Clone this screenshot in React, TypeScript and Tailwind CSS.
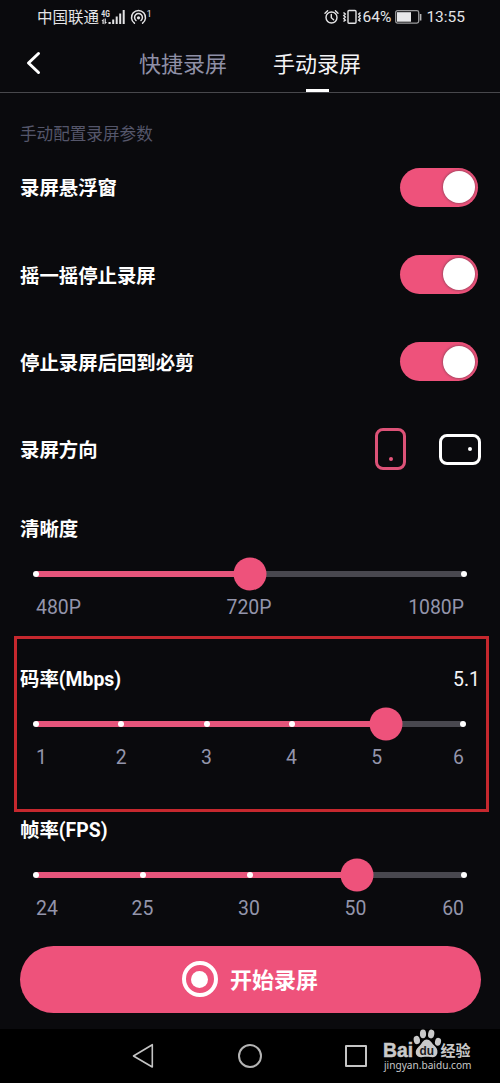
import { useState } from "react";

type SliderProps = {
  title: string;
  ticks: string[];
  percent: number;
  value?: string;
};

function SignalIcon() {
  return (
    <svg width="25" height="17" viewBox="0 0 25 17" fill="#e4e4e6" className="ml-[2px]" aria-hidden>
      <text x="0.3" y="7.500" fontSize="9.500" fontWeight="700" fontFamily="Roboto, sans-serif" textLength="8.500" lengthAdjust="spacingAndGlyphs">
        4G
      </text>
      <path d="M0.500 12 2.700 9.500V15H1.500v-3zM3.600 9.500h1.200V13H6l-2.400 2.500z" />
      <rect x="7.500" y="13" width="2.200" height="2" />
      <rect x="11.200" y="10.500" width="2" height="4.500" />
      <rect x="14.700" y="7.500" width="2" height="7.500" />
      <rect x="18.200" y="4.500" width="2" height="10.500" />
      <rect x="21.700" y="1" width="2" height="14" />
    </svg>
  );
}

function HotspotIcon() {
  return (
    <svg width="22" height="17" viewBox="0 0 22 17" fill="none" stroke="#e4e4e6" strokeWidth="1.500" strokeLinecap="round" className="ml-1" aria-hidden>
      <path d="M4.400 14.200A7 7 0 1 1 12.600 14.200" />
      <path d="M6 11.500A3.900 3.900 0 1 1 11 11.500" />
      <circle cx="8.500" cy="8.800" r="1.600" fill="#e4e4e6" stroke="none" />
      <text x="16.500" y="7.500" fill="#e4e4e6" stroke="none" fontSize="9.500" fontFamily="Roboto, sans-serif">
        1
      </text>
    </svg>
  );
}

function AlarmIcon() {
  return (
    <svg width="15" height="16" viewBox="0 0 15 16" fill="none" stroke="#e4e4e6" strokeWidth="1.400" strokeLinecap="round" aria-hidden>
      <circle cx="7.500" cy="8.500" r="5.500" />
      <path d="M7.300 5.500v3.200l2.300 2M1 4.200 3.600 1.800M14 4.200l-2.600-2.400" />
    </svg>
  );
}

function VibrateIcon() {
  return (
    <svg width="20" height="16" viewBox="0 0 20 16" fill="none" stroke="#e4e4e6" strokeWidth="1.400" aria-hidden>
      <rect x="6" y="1.500" width="8" height="12.800" rx="1" />
      <path d="m1.500 3.500 1.800 1.600-1.500 1.500 1.500 1.500-1.500 1.500 1.500 1.500-1.800 1.400M18.500 3.500l-1.800 1.600 1.500 1.500-1.500 1.500 1.500 1.500-1.500 1.500 1.800 1.400" />
    </svg>
  );
}

function BatteryIcon() {
  return (
    <svg width="27" height="14" viewBox="0 0 27 14" fill="none" aria-hidden>
      <rect x="0.700" y="0.700" width="23" height="12.400" rx="1.800" stroke="#9a9a9c" strokeWidth="1.300" />
      <rect x="2" y="2.200" width="14" height="9.500" fill="#e8e8ea" />
      <rect x="24.800" y="4" width="1.600" height="6.500" fill="#b5b5b7" />
    </svg>
  );
}

function StatusBar() {
  return (
    <div className="flex h-[34px] items-center pr-[35px] pl-[37px] text-[15.5px] text-[#e4e4e6]">
      <span className="pt-[3px]">中国联通</span>
      <SignalIcon />
      <HotspotIcon />
      <div className="ml-auto flex items-center">
        <AlarmIcon />
        <span className="ml-[3px]">
          <VibrateIcon />
        </span>
        <span className="ml-[1px] pt-[2px]">64%</span>
        <span className="ml-1">
          <BatteryIcon />
        </span>
        <span className="ml-[4px] pt-[2px]">13:55</span>
      </div>
    </div>
  );
}

function Header() {
  return (
    <header className="flex h-[59px] border-b border-[#48484c] text-[22px]">
      <button type="button" aria-label="返回" className="w-[139px] pl-[26px]">
        <svg width="16" height="24" viewBox="0 0 16 24" fill="none" stroke="#fff" strokeWidth="3" strokeLinecap="round" strokeLinejoin="round">
          <path d="M12.500 2.500 2.500 12l10 9.500" />
        </svg>
      </button>
      <button type="button" className="pt-[3px] text-[#8f90a6]">
        快捷录屏
      </button>
      <button type="button" className="ml-[46px] flex flex-col items-center justify-between text-[#f4f4f6]">
        <span className="pt-[20px]">手动录屏</span>
        <span className="h-[3px] w-[23px] bg-white" />
      </button>
    </header>
  );
}

function Toggle() {
  const [on, setOn] = useState(true);
  return (
    <button
      type="button"
      role="switch"
      aria-checked={on}
      onClick={() => setOn(!on)}
      className={`flex h-[39px] w-[78px] items-center rounded-full px-[3.5px] ${on ? "justify-end bg-[#ee527b]" : "justify-start bg-[#48474e]"}`}
    >
      <span className="size-[32px] rounded-full bg-white shadow-[0_0_2px_1px_rgba(90,60,70,0.45)]" />
    </button>
  );
}

function Row({ label, children }: { label: string; children: React.ReactNode }) {
  return (
    <div className="flex h-[87.300px] items-center justify-between text-[19.4px] font-bold">
      <span className="pt-1">{label}</span>
      {children}
    </div>
  );
}

function Slider({ title, ticks, percent, value }: SliderProps) {
  const last = ticks.length - 1;
  return (
    <div className="flex flex-col">
      <div className="flex h-[51px] items-center justify-between pt-[3px] text-[19.4px]">
        <span className="font-bold">{title}</span>
        {value ? <span className="text-[#f4f4f6]">{value}</span> : null}
      </div>
      <div className="flex h-10 items-center px-4">
        <div className="relative flex h-[6px] w-full items-center justify-between bg-[#48474e]">
          <div className="absolute inset-y-0 left-0 bg-[#e5557b]" style={{ width: `${percent}%` }} />
          {ticks.map((t, i) => (
            <span key={t} className={`relative flex justify-center ${i === last ? "w-px" : "w-0"}`}>
              <span className="size-[6px] shrink-0 rounded-full bg-white" />
            </span>
          ))}
          <div
            className="absolute top-1/2 size-[33px] -translate-x-1/2 -translate-y-1/2 rounded-full bg-[#ee527b]"
            style={{ left: `${percent}%` }}
          />
        </div>
      </div>
      <div className="flex h-[26px] items-center justify-between px-4 pt-[2px] text-[19.4px] text-[#9495ab]">
        {ticks.map((t, i) => (
          <span
            key={t}
            className={`flex ${i === 0 ? "w-0 justify-start" : i === last ? "w-[2px] justify-end" : "w-0 justify-center"}`}
          >
            {t}
          </span>
        ))}
      </div>
    </div>
  );
}

function NavBar() {
  return (
    <nav className="relative flex h-[54px] items-center justify-between bg-black pr-[133px] pl-[132px]">
      <svg width="22" height="26" viewBox="0 0 22 26" fill="none" stroke="#c4c4c4" strokeWidth="1.600" strokeLinejoin="round" aria-hidden>
        <path d="M20.300 1.700v22.300L1.500 13z" />
      </svg>
      <span className="size-[24px] rounded-full border-2 border-[#b4b4b4]" />
      <span className="size-[22px] rounded-[1px] border-2 border-[#c4c4c4]" />
      <Watermark />
    </nav>
  );
}

function Watermark() {
  return (
    <svg className="absolute top-0 left-[380px]" width="96" height="46" viewBox="0 0 96 46" fill="#c9c9c9" aria-label="Baidu 经验">
      <text x="3" y="28" fontSize="20" fontWeight="700" fontFamily="Liberation Sans, sans-serif" textLength="30" lengthAdjust="spacingAndGlyphs" stroke="#c9c9c9" strokeWidth="0.500">
        Bai
      </text>
      <ellipse cx="36.800" cy="11" rx="3.100" ry="4.200" transform="rotate(-12 36.800 11)" />
      <ellipse cx="43" cy="4.800" rx="3.100" ry="4.400" />
      <ellipse cx="51.200" cy="5" rx="3.100" ry="4.400" transform="rotate(10 51.200 5)" />
      <ellipse cx="58" cy="12.800" rx="3" ry="4" transform="rotate(14 58 12.800)" />
      <path d="M46.800 10.500c3.400 0 4.800 3.400 6.900 5.500 2.600 2.500 4.200 4.500 3.700 7.700-.6 4-3.800 4.900-6.800 4.400-2.800-.5-4.800-.5-7.600 0-3.200.4-7-.6-7.200-4.400-.2-3.400 2.200-5.200 4.500-7.700 1.900-2.100 3.100-5.500 6.500-5.500z" />
      <text x="39.500" y="26" fill="#1a1a1a" fontSize="13" fontWeight="700" fontFamily="Liberation Sans, sans-serif" textLength="14.500" lengthAdjust="spacingAndGlyphs">
        du
      </text>
      <text x="60.500" y="27" fontSize="15" fontWeight="700" fontFamily="Noto Sans CJK SC, sans-serif">
        经验
      </text>
      <text x="4" y="40" fontSize="10.500" fontFamily="Noto Sans, sans-serif" textLength="87.500" lengthAdjust="spacingAndGlyphs">
        jingyan.baidu.com
      </text>
    </svg>
  );
}

export default function App() {
  return (
    <div className="flex h-[1083px] w-[500px] flex-col overflow-hidden bg-[#0a0a0d] font-[Roboto,'Noto_Sans_CJK_SC',sans-serif] leading-none text-white">
      <StatusBar />
      <Header />
      <main className="flex grow flex-col px-5">
        <p className="h-[50.500px] pt-[34px] text-[16.6px] text-[#55566a]">手动配置录屏参数</p>
        <div className="pr-[2px]">
          <Row label="录屏悬浮窗">
            <Toggle />
          </Row>
          <Row label="摇一摇停止录屏">
            <Toggle />
          </Row>
          <Row label="停止录屏后回到必剪">
            <Toggle />
          </Row>
        </div>
        <Row label="录屏方向">
          <div className="-mr-px flex items-center gap-[33px]">
            <button type="button" aria-label="竖屏" className="flex h-[42px] w-[31px] items-end justify-center rounded-[8px] border-[3px] border-[#dc5277] pb-[6px]">
              <span className="size-[4px] rounded-full bg-[#e5557b]" />
            </button>
            <button type="button" aria-label="横屏" className="flex h-[31px] w-[42px] items-center justify-end rounded-[8px] border-[3px] border-white pr-[6px]">
              <span className="size-[4px] rounded-full bg-white" />
            </button>
          </div>
        </Row>
        <div className="mt-[10px] flex flex-col gap-[33.500px]">
          <Slider title="清晰度" ticks={["480P", "720P", "1080P"]} percent={50} />
          <div className="relative">
            <Slider title="码率(Mbps)" ticks={["1", "2", "3", "4", "5", "6"]} percent={81.800} value="5.1" />
            <div className="pointer-events-none absolute -top-[17px] -left-[6px] h-[176px] w-[475px] border-[3px] border-[#c6282e]" />
          </div>
          <Slider title="帧率(FPS)" ticks={["24", "25", "30", "50", "60"]} percent={75} />
        </div>
        <button type="button" className="-mx-[0.5px] mt-[25px] flex h-[67px] shrink-0 items-center justify-center gap-[12px] rounded-full bg-[#ee527b] text-[22px] font-bold">
          <span className="flex size-[36px] items-center justify-center rounded-full border-4 border-white">
            <span className="size-[17px] rounded-full bg-white" />
          </span>
          <span className="pt-[3px]">开始录屏</span>
        </button>
      </main>
      <NavBar />
    </div>
  );
}
